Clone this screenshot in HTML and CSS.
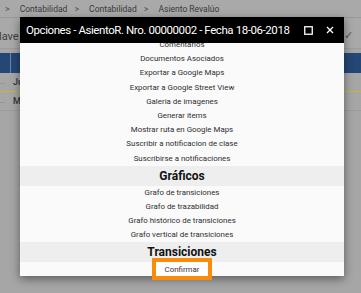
FILE: index.html
```html
<!DOCTYPE html>
<html lang="es">
<head>
<meta charset="utf-8">
<title>Opciones</title>
<link rel="stylesheet" href="styles.css">
</head>
<body>
<div class="page">
  <div class="crumbs">
    <span class="sep">&gt;</span><span>Contabilidad</span>
    <span class="sep">&gt;</span><span>Contabilidad</span>
    <span class="sep">&gt;</span><span>Asiento Revalúo</span>
  </div>
  <div class="toolbar">
    <span class="field">lave</span>
    <span class="check">✓</span>
  </div>
  <div class="grid">
    <div class="grid-head"><span class="hc1"></span><span class="hc2"></span></div>
    <div class="grid-row first"><span class="dots">…</span><span class="val">Ju</span></div>
    <div class="grid-row"><span class="dots">…</span><span class="val">M</span></div>
  </div>
</div>

<div class="dialog">
  <div class="dlg-title">
    <span class="dlg-text">Opciones - AsientoR. Nro. 00000002 - Fecha 18-06-2018</span>
    <span class="dlg-icons">
      <svg width="9" height="9" viewBox="0 0 9 9"><rect x="0.75" y="0.75" width="7.5" height="7.5" fill="none" stroke="#fff" stroke-width="1.3"/></svg>
      <svg width="8" height="8" viewBox="0 0 8 8"><path d="M1 1L7 7M7 1L1 7" stroke="#fff" stroke-width="1.3" fill="none"/></svg>
    </span>
  </div>
  <div class="dlg-body">
    <ul class="list">
      <li>Comentarios</li>
      <li>Documentos Asociados</li>
      <li>Exportar a Google Maps</li>
      <li>Exportar a Google Street View</li>
      <li>Galeria de imagenes</li>
      <li>Generar items</li>
      <li>Mostrar ruta en Google Maps</li>
      <li>Suscribir a notificacion de clase</li>
      <li>Suscribirse a notificaciones</li>
      <li class="head">Gráficos</li>
      <li>Grafo de transiciones</li>
      <li>Grafo de trazabilidad</li>
      <li>Grafo histórico de transiciones</li>
      <li>Grafo vertical de transiciones</li>
      <li class="head">Transiciones</li>
      <li class="action"><button class="btn">Confirmar</button></li>
    </ul>
  </div>
</div>
</body>
</html>
```

FILE: styles.css
```css
html, body {
  margin: 0;
  padding: 0;
}
body {
  width: 361px;
  height: 293px;
  overflow: hidden;
  background: #a6a6a6;
  font-family: Roboto, "Noto Sans", sans-serif;
  position: relative;
}
.page {
  display: flex;
  flex-direction: column;
}
.crumbs {
  height: 17px;
  display: flex;
  align-items: center;
  gap: 7px;
  padding-left: 5px;
  font-size: 8.5px;
  color: #3a3a3a;
  background: #a9a9a9;
  border-bottom: 1px solid #999;
}
.crumbs .sep {
  font-size: 9px;
  color: #555;
  margin: 0 3px 0 0;
}
.toolbar {
  height: 30px;
  display: flex;
  align-items: center;
  justify-content: space-between;
  background: #a9a9a9;
  border-bottom: 1px solid #9c9c9c;
}
.field {
  font-size: 11px;
  color: #3d3d3d;
  margin-left: -1px;
  padding-top: 6px;
}
.check {
  font-size: 11px;
  color: #555;
  margin-right: 8px;
  padding-top: 5px;
}
.grid {
  margin-top: 4px;
}
.grid-head {
  height: 20px;
  background: #254775;
  display: flex;
}
.hc1 {
  width: 10px;
  border-right: 1px solid #6e86a8;
}
.grid-row {
  height: 18px;
  display: flex;
  align-items: center;
  font-size: 9px;
  color: #333;
  border-bottom: 1px solid #9a9a9a;
}
.grid-row.first {
  border-bottom: 1px solid #c9b23c;
}
.dots {
  width: 13px;
  color: #777;
  font-size: 7px;
}
.val {
  font-weight: 500;
}
.dialog {
  position: absolute;
  left: 20px;
  top: 17px;
  width: 324px;
  background: #fafafa;
  box-shadow: 0 3px 9px rgba(0, 0, 0, 0.45);
}
.dlg-title {
  height: 26px;
  background: #000;
  color: #fff;
  display: flex;
  align-items: center;
  justify-content: space-between;
  padding: 0 10px 0 6px;
  position: relative;
  z-index: 1;
}
.dlg-text {
  font-size: 11.5px;
  letter-spacing: -0.42px;
  white-space: nowrap;
}
.dlg-icons {
  display: flex;
  flex-shrink: 0;
  align-items: center;
  gap: 13px;
}
.dlg-icons svg {
  display: block;
}
.dlg-body {
  clip-path: inset(0 -20px -20px -20px);
}
.list {
  list-style: none;
  margin: -5px 0 0;
  padding: 0;
  text-align: center;
  font-size: 7.9px;
  color: #2e2e2e;
}
.list li {
  height: 14.2px;
  line-height: 14.2px;
}
.list li.head {
  height: 20px;
  line-height: 20px;
  background: #eeeeee;
  font-size: 12px;
  font-weight: 700;
  color: #111;
}
.list li.action {
  height: 14px;
  display: flex;
  justify-content: center;
}
.btn {
  width: 52px;
  height: 14px;
  padding: 0;
  border: none;
  background: #fff;
  font-family: inherit;
  font-size: 7.9px;
  color: #333;
  box-shadow: 0 0 0 4px #f98d0b;
}
```
